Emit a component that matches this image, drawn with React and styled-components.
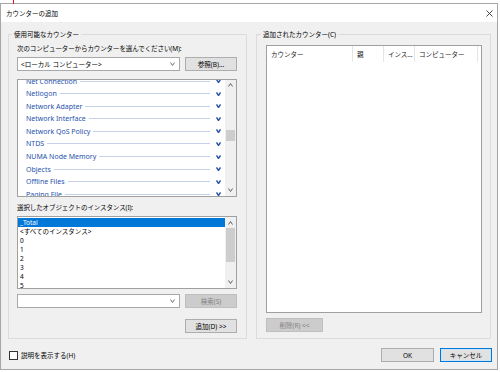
import React from "react";
import styled, { createGlobalStyle } from "styled-components";

const Global = createGlobalStyle`
  html, body { margin: 0; padding: 0; background: #fff; }
  body {
    font-family: "Noto Sans", "Noto Sans CJK JP", sans-serif;
    font-size: 6.5px;
    color: #000;
  }
  * { box-sizing: border-box; }
`;

const Page = styled.div`
  position: relative;
  width: 500px;
  height: 372px;
  padding-top: 3px;
  overflow: hidden;
`;

const Tick = styled.div`
  position: absolute;
  left: 13px;
  top: 0;
  width: 1px;
  height: 4px;
  background: #e81123;
`;

const Window = styled.div`
  width: 498px;
  height: 367px;
  border: 1px solid #a6a6a6;
  display: flex;
  flex-direction: column;
  background: #f0f0f0;
`;

const TitleBar = styled.div`
  height: 18px;
  background: #fff;
  display: flex;
  align-items: center;
  justify-content: space-between;
  padding: 0 4px 0 5px;
  line-height: 9px;
`;

const Body = styled.div`
  flex: 1;
  display: flex;
  flex-direction: column;
  padding: 8px 6px 0 7px;
`;

const Groups = styled.div`
  display: grid;
  grid-template-columns: 239px 235px;
  column-gap: 9px;
  height: 309px;
`;

const Group = styled.fieldset`
  margin: 0;
  min-width: 0;
  height: 100%;
  border: 1px solid #dcdcdc;
  padding: 0 ${(p) => p.$pr}px 5px ${(p) => p.$pl}px;
  display: flex;
  flex-direction: column;
`;

const Legend = styled.legend`
  padding: 0 2px;
  margin-left: -5px;
  line-height: 9px;
  font-size: 6.5px;
`;

const Label = styled.div`
  margin-top: ${(p) => p.$mt}px;
  line-height: 9px;
  height: 9px;
  white-space: nowrap;
  letter-spacing: -0.1px;
`;

const Row = styled.div`
  display: flex;
  align-items: center;
  justify-content: ${(p) => p.$justify || "space-between"};
  margin-top: ${(p) => p.$mt}px;
  gap: ${(p) => p.$gap || 0}px;
`;

const Combo = styled.div`
  width: 163px;
  height: 14px;
  background: #fff;
  border: 1px solid #a8a8a8;
  display: flex;
  align-items: center;
  justify-content: space-between;
  padding: 0 4px 0 3px;
  line-height: 9px;
  white-space: nowrap;
`;

const Button = styled.div`
  width: ${(p) => p.$w}px;
  height: 14px;
  display: flex;
  align-items: center;
  justify-content: center;
  line-height: 9px;
  white-space: nowrap;
  background: ${(p) => (p.$disabled ? "#cccccc" : "#e1e1e1")};
  border: 1px solid
    ${(p) => (p.$default ? "#0078d7" : p.$disabled ? "#bfbfbf" : "#adadad")};
  color: ${(p) => (p.$disabled ? "#838383" : "#000")};
  box-shadow: ${(p) => (p.$default ? "inset 0 0 0 1px #cfe3f7" : "none")};
`;

const ListBox = styled.div`
  margin-top: ${(p) => p.$mt}px;
  height: ${(p) => p.$h}px;
  border: 1px solid #a0a0a0;
  background: #fff;
  display: flex;
  overflow: hidden;
`;

const Items = styled.div`
  flex: 1;
  min-width: 0;
  overflow: hidden;
`;

const ItemsInner = styled.div`
  margin-top: ${(p) => p.$offset || 0}px;
`;

const CounterRow = styled.div`
  height: 12.6px;
  display: flex;
  align-items: center;
  padding: 0 4px 0 8px;
  color: #2753ad;
  white-space: nowrap;
  line-height: 9px;
  font-size: 7px;
`;

const Rule = styled.span`
  flex: 1;
  height: 1px;
  background: #c6d1ec;
  margin: 0 6px 0 3px;
`;

const InstanceRow = styled.div`
  height: 9px;
  line-height: 9px;
  padding-left: 2px;
  white-space: nowrap;
  background: ${(p) => (p.$selected ? "#0078d7" : "transparent")};
  color: ${(p) => (p.$selected ? "#fff" : "#000")};
`;

const ScrollBar = styled.div`
  width: 11px;
  background: #f0f0f0;
  display: flex;
  flex-direction: column;
  align-items: center;
`;

const ScrollArrow = styled.div`
  height: ${(p) => p.$h}px;
  width: 100%;
  display: flex;
  align-items: center;
  justify-content: center;
`;

const Track = styled.div`
  flex: 1;
  width: 100%;
  padding: 0 1px;
`;

const Thumb = styled.div`
  margin-top: ${(p) => p.$top}px;
  height: ${(p) => p.$h}px;
  background: #cdcdcd;
`;

const ListView = styled.div`
  margin-top: 6px;
  height: 268px;
  border: 1px solid #a0a0a0;
  background: #fff;
`;

const Header = styled.div`
  display: flex;
  height: 16px;
`;

const HeaderCell = styled.div`
  width: ${(p) => p.$w}px;
  border-right: 1px solid #e5e5e5;
  padding-left: 4px;
  display: flex;
  align-items: center;
  line-height: 9px;
  white-space: nowrap;
  overflow: hidden;
  color: #1a1a1a;
`;

const Footer = styled.div`
  display: flex;
  align-items: center;
  justify-content: space-between;
  margin-top: 9px;
  padding-left: 1px;
  margin-right: -1px;
`;

const CheckLabel = styled.label`
  display: flex;
  align-items: center;
  gap: 3px;
  line-height: 9px;
`;

const CheckBox = styled.span`
  width: 9px;
  height: 9px;
  border: 1px solid #333;
  background: #fff;
`;

const ButtonGroup = styled.div`
  display: flex;
  gap: 6px;
`;

const Chevron = ({ color = "#606060", up = false, w = 5, h = 3, sw = 1 }) => (
  <svg width={w} height={h + 1} viewBox={`0 0 ${w} ${h + 1}`}>
    <polyline
      points={
        up
          ? `0.5,${h + 0.5} ${w / 2},0.5 ${w - 0.5},${h + 0.5}`
          : `0.5,0.5 ${w / 2},${h + 0.5} ${w - 0.5},0.5`
      }
      fill="none"
      stroke={color}
      strokeWidth={sw}
    />
  </svg>
);

const CloseIcon = () => (
  <svg width="7" height="7" viewBox="0 0 7 7">
    <path d="M0.5 0.5 L6.5 6.5 M6.5 0.5 L0.5 6.5" stroke="#333" strokeWidth="0.9" />
  </svg>
);

const counters = [
  "Net Connection",
  "Netlogon",
  "Network Adapter",
  "Network Interface",
  "Network QoS Policy",
  "NTDS",
  "NUMA Node Memory",
  "Objects",
  "Offline Files",
  "Paging File",
];

const instances = ["_Total", "<すべてのインスタンス>", "0", "1", "2", "3", "4", "5"];

export default function App() {
  return (
    <>
      <Global />
      <Page>
        <Tick />
        <Window>
          <TitleBar>
            <span>カウンターの追加</span>
            <CloseIcon />
          </TitleBar>
          <Body>
            <Groups>
              <Group $pl={8} $pr={9}>
                <Legend>使用可能なカウンター</Legend>
                <Label $mt={5}>次のコンピューターからカウンターを選んでください(M):</Label>
                <Row $mt={4}>
                  <Combo>
                    <span>&lt;ローカル コンピューター&gt;</span>
                    <Chevron color="#707070" />
                  </Combo>
                  <Button $w={52}>参照(B)...</Button>
                </Row>
                <ListBox $mt={8} $h={118}>
                  <Items>
                    <ItemsInner $offset={-5.3}>
                      {counters.map((c) => (
                        <CounterRow key={c}>
                          <span>{c}</span>
                          <Rule />
                          <Chevron color="#2753ad" sw={1.4} />
                        </CounterRow>
                      ))}
                    </ItemsInner>
                  </Items>
                  <ScrollBar>
                    <ScrollArrow $h={10}>
                      <Chevron up />
                    </ScrollArrow>
                    <Track>
                      <Thumb $top={40} $h={11} />
                    </Track>
                    <ScrollArrow $h={12}>
                      <Chevron />
                    </ScrollArrow>
                  </ScrollBar>
                </ListBox>
                <Label $mt={6}>選択したオブジェクトのインスタンス(I):</Label>
                <ListBox $mt={4} $h={73}>
                  <Items>
                    <ItemsInner $offset={1}>
                      {instances.map((i, idx) => (
                        <InstanceRow key={i} $selected={idx === 0}>
                          {i}
                        </InstanceRow>
                      ))}
                    </ItemsInner>
                  </Items>
                  <ScrollBar>
                    <ScrollArrow $h={11}>
                      <Chevron up />
                    </ScrollArrow>
                    <Track>
                      <Thumb $top={0} $h={34} />
                    </Track>
                    <ScrollArrow $h={12}>
                      <Chevron />
                    </ScrollArrow>
                  </ScrollBar>
                </ListBox>
                <Row $mt={5}>
                  <Combo>
                    <span />
                    <Chevron color="#707070" />
                  </Combo>
                  <Button $w={52} $disabled>
                    検索(S)
                  </Button>
                </Row>
                <Row $mt={11} $justify="flex-end">
                  <Button $w={52}>追加(D) &gt;&gt;</Button>
                </Row>
              </Group>
              <Group $pl={9} $pr={8}>
                <Legend>追加されたカウンター(C)</Legend>
                <ListView>
                  <Header>
                    <HeaderCell $w={86}>カウンター</HeaderCell>
                    <HeaderCell $w={31}>親</HeaderCell>
                    <HeaderCell $w={31}>インス...</HeaderCell>
                    <HeaderCell $w={63}>コンピューター</HeaderCell>
                  </Header>
                </ListView>
                <Row $mt={5} $justify="flex-start">
                  <Button $w={57} $disabled>
                    削除(R) &lt;&lt;
                  </Button>
                </Row>
              </Group>
            </Groups>
            <Footer>
              <CheckLabel>
                <CheckBox />
                <span>説明を表示する(H)</span>
              </CheckLabel>
              <ButtonGroup>
                <Button $w={53}>OK</Button>
                <Button $w={52} $default>
                  キャンセル
                </Button>
              </ButtonGroup>
            </Footer>
          </Body>
        </Window>
      </Page>
    </>
  );
}
